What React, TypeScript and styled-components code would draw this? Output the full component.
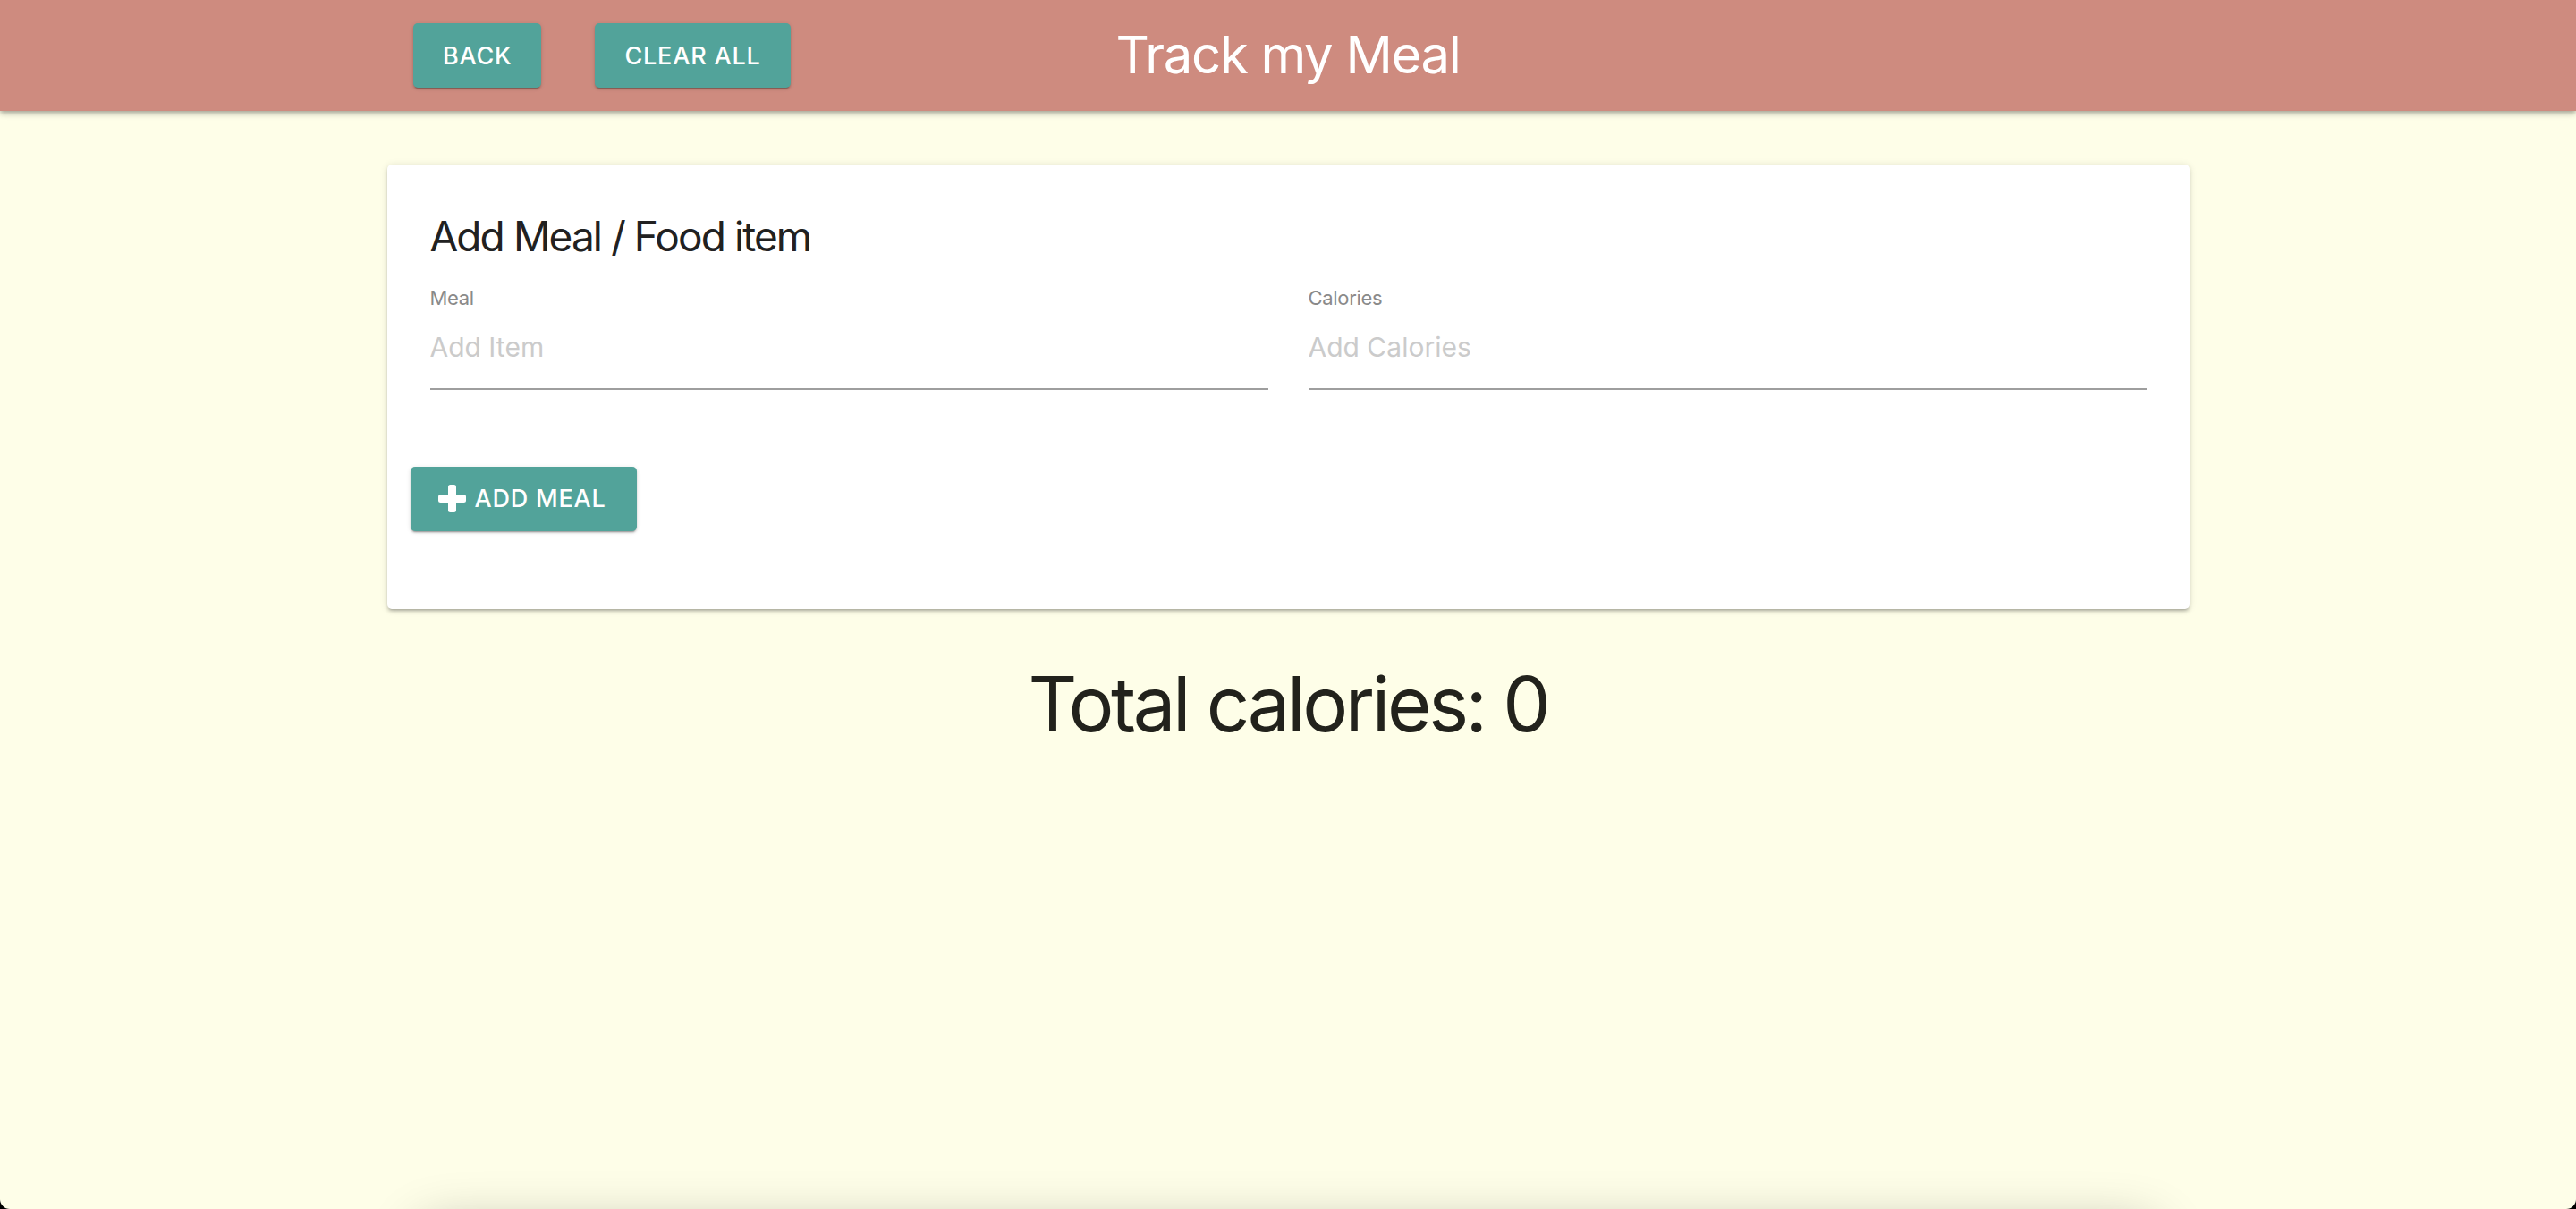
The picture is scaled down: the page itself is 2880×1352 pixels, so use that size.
import React from "react";
import styled, { createGlobalStyle } from "styled-components";

const GlobalStyle = createGlobalStyle`
  html, body {
    margin: 0;
    padding: 0;
    background: #000;
  }
  * { box-sizing: border-box; }
  body {
    font-family: Inter, "Noto Sans", Roboto, sans-serif;
  }
`;

const Page = styled.div`
  height: 1352px;
  overflow: hidden;
  background: #fefee8;
  border-radius: 0 0 11px 11px;
  display: flex;
  flex-direction: column;
  align-items: center;
`;

const Header = styled.header`
  width: 100%;
  height: 124px;
  flex-shrink: 0;
  background: #ce8b7f;
  box-shadow: 0px 2px 4px -1px rgba(0, 0, 0, 0.2), 0px 4px 5px 0px rgba(0, 0, 0, 0.14),
    0px 1px 10px 0px rgba(0, 0, 0, 0.12);
  position: relative;
  z-index: 2;
`;

const HeaderInner = styled.div`
  width: 2016px;
  height: 100%;
  margin: 0 auto;
  padding: 0 30px;
  display: grid;
  grid-template-columns: 1fr auto 1fr;
  align-items: center;
`;

const HeaderActions = styled.div`
  display: flex;
  gap: 60px;
  align-items: center;
`;

const Title = styled.h1`
  margin: 0;
  color: #ffffff;
  font-family: Inter, sans-serif;
  font-weight: 400;
  font-size: 58px;
  letter-spacing: -1.3px;
  line-height: 1.2;
  grid-column: 2;
`;

const Button = styled.button<{ $pad?: string }>`
  height: 72px;
  border: none;
  border-radius: 5px;
  background: #52a39a;
  color: #ffffff;
  font-family: Inter, sans-serif;
  font-size: 27px;
  font-weight: 500;
  letter-spacing: 0.8px;
  text-transform: uppercase;
  padding: ${(p) => p.$pad || "0 33px"};
  display: inline-flex;
  align-items: center;
  gap: 10px;
  cursor: pointer;
  box-shadow: 0px 3px 1px -2px rgba(0, 0, 0, 0.2), 0px 2px 2px 0px rgba(0, 0, 0, 0.14),
    0px 1px 5px 0px rgba(0, 0, 0, 0.12);
`;

const Card = styled.section`
  width: 2015px;
  margin-top: 60px;
  background: #ffffff;
  border-radius: 5px;
  padding: 52px 48px 87px;
  box-shadow: 0px 3px 3px -2px rgba(0, 0, 0, 0.2), 0px 3px 4px 0px rgba(0, 0, 0, 0.14),
    0px 1px 8px 0px rgba(0, 0, 0, 0.12);
  flex-shrink: 0;
`;

const CardTitle = styled.h2`
  margin: 0;
  font-size: 46px;
  font-weight: 400;
  line-height: 1.25;
  color: #212121;
  letter-spacing: -1.9px;
`;

const FieldRow = styled.div`
  display: grid;
  grid-template-columns: 1fr 1fr;
  column-gap: 45px;
  margin-top: 26px;
`;

const Field = styled.label`
  display: flex;
  flex-direction: column;
`;

const FieldLabel = styled.span`
  font-size: 22px;
  line-height: 1.2;
  color: #8a8a8a;
  letter-spacing: -0.3px;
`;

const Input = styled.input`
  border: none;
  border-bottom: 2px solid #9e9e9e;
  outline: none;
  padding: 24px 0 28px;
  font-family: Inter, sans-serif;
  font-size: 30px;
  line-height: 36px;
  height: 90px;
  color: #212121;
  background: transparent;
  &::placeholder {
    color: #cbcbcb;
  }
`;

const ButtonRow = styled.div`
  margin-top: 86px;
  margin-left: -22px;
  display: flex;
`;

const Total = styled.h3`
  margin: 56px 0 0;
  font-size: 85px;
  font-weight: 400;
  line-height: 1.2;
  color: #22221c;
  letter-spacing: -3.4px;
  flex-shrink: 0;
`;

const MealList = styled.div`
  width: 1940px;
  height: 300px;
  margin-top: 534px;
  flex-shrink: 0;
  background: #fefee8;
  border-radius: 20px;
  box-shadow: 0 0 60px rgba(0, 0, 0, 0.3);
`;

const PlusIcon = () => (
  <svg width="31" height="31" viewBox="0 0 31 31" aria-hidden="true">
    <rect x="11" y="0" width="9" height="31" rx="2.5" fill="#fff" />
    <rect x="0" y="11" width="31" height="9" rx="2.5" fill="#fff" />
  </svg>
);

export default function App() {
  return (
    <>
      <GlobalStyle />
      <Page>
        <Header>
          <HeaderInner>
            <HeaderActions>
              <Button>Back</Button>
              <Button>Clear All</Button>
            </HeaderActions>
            <Title>Track my Meal</Title>
          </HeaderInner>
        </Header>
        <Card>
          <CardTitle>Add Meal / Food item</CardTitle>
          <FieldRow>
            <Field>
              <FieldLabel>Meal</FieldLabel>
              <Input placeholder="Add Item" />
            </Field>
            <Field>
              <FieldLabel>Calories</FieldLabel>
              <Input placeholder="Add Calories" />
            </Field>
          </FieldRow>
          <ButtonRow>
            <Button $pad="0 34px 0 31px">
              <PlusIcon />
              Add Meal
            </Button>
          </ButtonRow>
        </Card>
        <Total>Total calories: 0</Total>
        <MealList />
      </Page>
    </>
  );
}
